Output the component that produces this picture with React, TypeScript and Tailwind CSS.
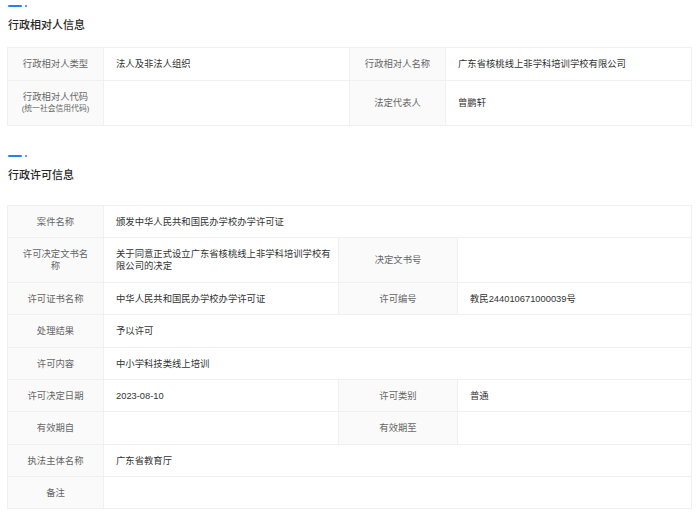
import type { ReactNode } from 'react';

const FONT = '"Liberation Sans", "Noto Sans CJK SC", sans-serif';

function SectionTitle({ title }: { title: string }) {
  return (
    <div className="pl-[8px]">
      <div className="flex items-center gap-[3px]">
        <div className="h-[2px] w-[14px] rounded-full bg-[#2b7cf6]" />
        <div className="h-[2px] w-[2px] rounded-full bg-[#2b7cf6]" />
      </div>
      <h3 className="mt-[10px] text-[11px] leading-[16px] font-medium text-[#262626]">{title}</h3>
    </div>
  );
}

function Label({ children, className = '' }: { children: ReactNode; className?: string }) {
  return (
    <div
      className={`flex flex-col items-center justify-center border-r border-b border-[#f0f0f0] bg-[#fafafa] px-3 text-center text-[9.33px] leading-[12px] text-[#666] ${className}`}
    >
      {children}
    </div>
  );
}

function Value({ children, className = '' }: { children?: ReactNode; className?: string }) {
  return (
    <div
      className={`flex items-center border-r border-b border-[#f0f0f0] bg-white pr-1 pl-3 text-[9.33px] leading-[12px] text-[#333] ${className}`}
    >
      <div>{children}</div>
    </div>
  );
}

export default function App() {
  return (
    <div className="min-h-[516px] w-[700px] bg-white pt-[5px]" style={{ fontFamily: FONT }}>
      {/* 行政相对人信息 */}
      <SectionTitle title="行政相对人信息" />
      <div className="mt-[14px] ml-[7px] grid w-[685px] grid-cols-[96px_1fr_96px_1fr] grid-rows-[33px_45px] border-t border-l border-[#f0f0f0]">
        <Label>行政相对人类型</Label>
        <Value>法人及非法人组织</Value>
        <Label>行政相对人名称</Label>
        <Value>广东省核桃线上非学科培训学校有限公司</Value>

        <Label>
          <span>行政相对人代码</span>
          <span className="text-[7.8px] leading-[12px]">(统一社会信用代码)</span>
        </Label>
        <Value />
        <Label>法定代表人</Label>
        <Value>曾鹏轩</Value>
      </div>

      {/* 行政许可信息 */}
      <div className="mt-[29px]">
        <SectionTitle title="行政许可信息" />
      </div>
      <div className="mt-[22px] ml-[7px] grid w-[685px] grid-cols-[96px_235px_119px_1fr] grid-rows-[32px_45px_32px_33px_32px_32px_33px_32px_32px] border-t border-l border-[#f0f0f0]">
        <Label>案件名称</Label>
        <Value className="col-span-3">颁发中华人民共和国民办学校办学许可证</Value>

        <Label>许可决定文书名称</Label>
        <Value>关于同意正式设立广东省核桃线上非学科培训学校有限公司的决定</Value>
        <Label>决定文书号</Label>
        <Value />

        <Label>许可证书名称</Label>
        <Value>中华人民共和国民办学校办学许可证</Value>
        <Label>许可编号</Label>
        <Value>教民244010671000039号</Value>

        <Label>处理结果</Label>
        <Value className="col-span-3">予以许可</Value>

        <Label>许可内容</Label>
        <Value className="col-span-3">中小学科技类线上培训</Value>

        <Label>许可决定日期</Label>
        <Value>2023-08-10</Value>
        <Label>许可类别</Label>
        <Value>普通</Value>

        <Label>有效期自</Label>
        <Value />
        <Label>有效期至</Label>
        <Value />

        <Label>执法主体名称</Label>
        <Value className="col-span-3">广东省教育厅</Value>

        <Label>备注</Label>
        <Value className="col-span-3" />
      </div>
    </div>
  );
}
